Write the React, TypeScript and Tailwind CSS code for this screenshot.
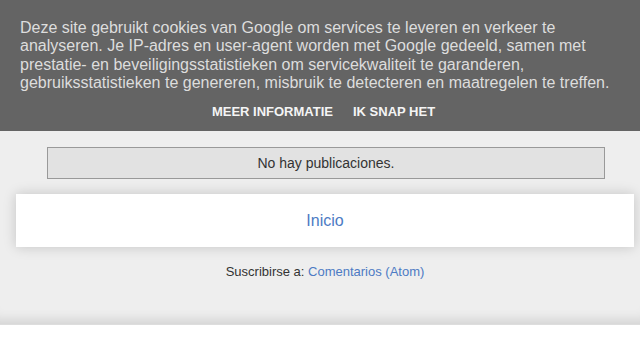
export default function App() {
  return (
    <div className="min-h-[360px] bg-white font-['Liberation_Sans',Arial,sans-serif]">
      {/* cookie notice */}
      <div className="h-[131px] bg-[#646464] px-5 pt-[19px]">
        <p className="text-[16px] leading-[18.4px] text-[#dddddd]">
          Deze site gebruikt cookies van Google om services te leveren en verkeer te analyseren. Je
          IP-adres en user-agent worden met Google gedeeld, samen met prestatie- en
          beveiligingsstatistieken om servicekwaliteit te garanderen, gebruiksstatistieken te
          genereren, misbruik te detecteren en maatregelen te treffen.
        </p>
        <div className="mt-[11px] flex justify-center gap-5 pl-[7px] text-[13px] font-bold leading-[15px] text-[#f4f4f4]">
          <a>MEER INFORMATIE</a>
          <a>IK SNAP HET</a>
        </div>
      </div>

      {/* main */}
      <div className="h-[193px] bg-[#eeeeee] pt-4 shadow-[inset_0_-14px_12px_-10px_rgba(0,0,0,0.12)]">
        <div className="ml-[47px] mr-[35px] h-[32px] border border-[#999999] bg-[#e2e2e2] text-center text-[14px] leading-[30px] text-[#333333]">
          No hay publicaciones.
        </div>
        <div className="ml-4 mr-[6px] mt-[15px] h-[53px] bg-white text-center text-[16px] leading-[53px] text-[#4d7bc4] shadow-[0_0_12px_rgba(0,0,0,0.18)]">
          Inicio
        </div>
        <div className="mt-[17px] pl-[10px] text-center text-[13px] leading-[16px] text-[#333333]">
          Suscribirse a: <a className="text-[#4d7bc4]">Comentarios (Atom)</a>
        </div>
      </div>
      <div className="h-px bg-[#dddddd]" />
    </div>
  );
}
